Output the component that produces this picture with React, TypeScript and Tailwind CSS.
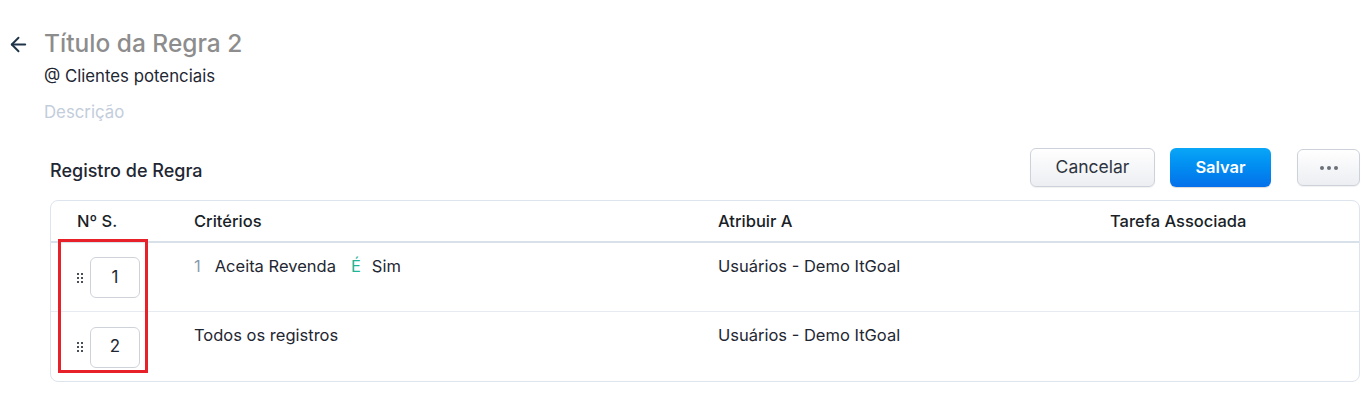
import { ArrowLeft } from "lucide-react";

type Row = {
  id: number;
  criteria: "first" | "all";
  assign: string;
};

const rows: Row[] = [
  { id: 1, criteria: "first", assign: "Usuários - Demo ItGoal" },
  { id: 2, criteria: "all", assign: "Usuários - Demo ItGoal" },
];

function DragHandle() {
  return (
    <div className="grid grid-cols-2 gap-x-[2px] gap-y-[2px]">
      {[0, 1, 2, 3, 4, 5].map((i) => (
        <span key={i} className="block h-[2px] w-[2px] bg-[#4a4f57]" />
      ))}
    </div>
  );
}

export default function App() {
  return (
    <div className="min-h-[396px] w-[1367px] bg-white font-['Inter',sans-serif] text-[#1f2733]">
      <div className="flex pt-[27px]">
        <div className="w-[44px] pl-[7px] pt-[6px]">
          <ArrowLeft className="h-[23px] w-[23px] text-[#1e3448]" strokeWidth={2} />
        </div>
        <div>
          <h1 className="text-[24.5px] leading-[32px] font-medium text-[#8d8d8d]">Título da Regra 2</h1>
          <p className="mt-[5px] text-[16.8px] leading-[24px] text-[#1f2733]">@ Clientes potenciais</p>
          <p className="mt-[12px] text-[16.8px] leading-[24px] text-[#c3cddb]">Descrição</p>
        </div>
      </div>

      <div className="relative mt-[24px] pl-[50px] pr-[7px]">
        <div className="flex items-center">
          <h2 className="flex-1 pt-[5px] text-[18px] font-medium text-[#1f2733]">Registro de Regra</h2>
          <button className="h-[39px] w-[125px] rounded-[6px] border border-[#cdd2da] bg-gradient-to-b from-white to-[#eceef2] text-[17.5px] text-[#2e3440] shadow-[0_1px_1px_rgba(0,0,0,0.06)]">
            Cancelar
          </button>
          <button className="ml-[15px] h-[39px] w-[101px] rounded-[6px] bg-gradient-to-b from-[#0aa6f7] to-[#0770ea] text-[16.5px] font-semibold text-white shadow-[0_1px_1px_rgba(0,0,0,0.15)]">
            Salvar
          </button>
          <button className="ml-[26px] flex h-[37px] w-[63px] items-center justify-center gap-[3px] rounded-[6px] border border-[#cdd2da] bg-gradient-to-b from-white to-[#eceef2] shadow-[0_1px_1px_rgba(0,0,0,0.06)]">
            <span className="h-[4px] w-[4px] rounded-full bg-[#6b7079]" />
            <span className="h-[4px] w-[4px] rounded-full bg-[#6b7079]" />
            <span className="h-[4px] w-[4px] rounded-full bg-[#6b7079]" />
          </button>
        </div>

        <div className="mt-[13px] overflow-hidden rounded-[8px] border border-[#dde4ee]">
          <div className="grid h-[42px] grid-cols-[117px_524px_392px_1fr] items-center border-b-2 border-[#d8e0ea] text-[16.5px] font-medium text-[#1a1f28]">
            <div className="pl-[26px]">Nº S.</div>
            <div className="pl-[26px]">Critérios</div>
            <div className="pl-[26px]">Atribuir A</div>
            <div className="pl-[26px]">Tarefa Associada</div>
          </div>
          {rows.map((row, idx) => (
            <div
              key={row.id}
              className={
                idx < rows.length - 1
                  ? "grid h-[69px] grid-cols-[117px_524px_392px_1fr] border-b border-[#e6ebf2] text-[16.5px]"
                  : "grid h-[69px] grid-cols-[117px_524px_392px_1fr] text-[16.5px]"
              }
            >
              <div className="flex items-center gap-[7px] pl-[26px] pt-[1px]">
                <DragHandle />
                <div className="flex h-[41px] w-[50px] items-center justify-center rounded-[6px] border border-[#cfd3d9] text-[17px] text-[#1f2733]">
                  {row.id}
                </div>
              </div>
              <div className="pl-[26px] pt-[11px]">
                {row.criteria === "first" ? (
                  <span className="flex items-center">
                    <span className="text-[#8c9bb0]">1</span>
                    <span className="ml-[14px] text-[#1f2733]">Aceita Revenda</span>
                    <span className="ml-[15px] text-[#1fb596]">É</span>
                    <span className="ml-[11px] text-[#1f2733]">Sim</span>
                  </span>
                ) : (
                  <span className="text-[#1f2733]">Todos os registros</span>
                )}
              </div>
              <div className="pl-[26px] pt-[11px] text-[#1f2733]">{row.assign}</div>
              <div />
            </div>
          ))}
        </div>

        <div className="pointer-events-none absolute left-[58px] top-[91px] h-[134px] w-[90px] border-[3px] border-[#e8202a]" />
      </div>
    </div>
  );
}
